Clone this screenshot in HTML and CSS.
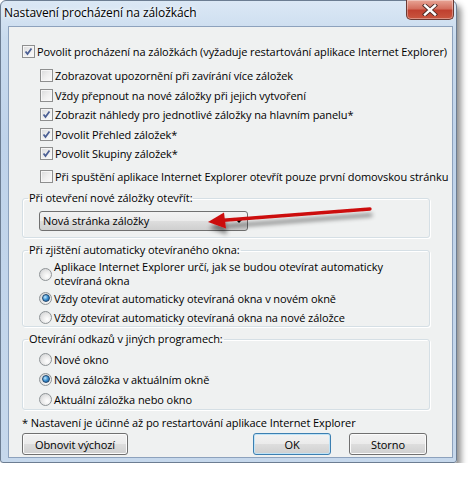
FILE: index.html
```html
<!DOCTYPE html>
<html lang="cs">
<head>
    <meta charset="UTF-8">
    <title>Nastavení procházení na záložkách</title>
    <link rel="stylesheet" href="styles.css">
</head>
<body>
    <div class="window">
        <div class="titlebar">
            <span class="title">Nastavení procházení na záložkách</span>
            <span class="close">
                <svg width="16" height="12" viewBox="0 0 16 12">
                    <path d="M3 1.5 L13 10.5 M13 1.5 L3 10.5" stroke="#4a2a26" stroke-width="4.2" stroke-linecap="square"/>
                    <path d="M3 1.5 L13 10.5 M13 1.5 L3 10.5" stroke="#ffffff" stroke-width="2.4" stroke-linecap="square"/>
                </svg>
            </span>
        </div>

        <div class="client">
            <label class="row main"><span class="box on"><svg viewBox="0 0 13 13"><path d="M3 6.5 L5.3 9.5 L10 3" /></svg></span>Povolit procházení na záložkách (vyžaduje restartování aplikace Internet Explorer)</label>

            <div class="sub">
                <label class="row"><span class="box"></span>Zobrazovat upozornění při zavírání více záložek</label>
                <label class="row"><span class="box"></span>Vždy přepnout na nové záložky při jejich vytvoření</label>
                <label class="row"><span class="box on"><svg viewBox="0 0 13 13"><path d="M3 6.5 L5.3 9.5 L10 3" /></svg></span>Zobrazit náhledy pro jednotlivé záložky na hlavním panelu*</label>
                <label class="row"><span class="box on"><svg viewBox="0 0 13 13"><path d="M3 6.5 L5.3 9.5 L10 3" /></svg></span>Povolit Přehled záložek*</label>
                <label class="row"><span class="box on"><svg viewBox="0 0 13 13"><path d="M3 6.5 L5.3 9.5 L10 3" /></svg></span>Povolit Skupiny záložek*</label>
                <label class="row last"><span class="box"></span>Při spuštění aplikace Internet Explorer otevřít pouze první domovskou stránku</label>
            </div>

            <fieldset class="group first">
                <legend>Při otevření nové záložky otevřít:</legend>
                <div class="combo">Nová stránka záložky<span class="caret"></span></div>
            </fieldset>

            <fieldset class="group second">
                <legend>Při zjištění automaticky otevíraného okna:</legend>
                <div class="options">
                    <label class="row tall"><span class="radio"></span><span class="two-line">Aplikace Internet Explorer určí, jak se budou otevírat automaticky<br>otevíraná okna</span></label>
                    <label class="row"><span class="radio on"></span>Vždy otevírat automaticky otevíraná okna v novém okně</label>
                    <label class="row"><span class="radio"></span>Vždy otevírat automaticky otevíraná okna na nové záložce</label>
                </div>
            </fieldset>

            <fieldset class="group third">
                <legend>Otevírání odkazů v jiných programech:</legend>
                <div class="options">
                    <label class="row"><span class="radio"></span>Nové okno</label>
                    <label class="row"><span class="radio on"></span>Nová záložka v aktuálním okně</label>
                    <label class="row"><span class="radio"></span>Aktuální záložka nebo okno</label>
                </div>
            </fieldset>

            <p class="note">* Nastavení je účinné až po restartování aplikace Internet Explorer</p>

            <div class="buttons">
                <button type="button" class="btn reset">Obnovit výchozí</button>
                <span class="spacer"></span>
                <button type="button" class="btn default">OK</button>
                <button type="button" class="btn">Storno</button>
            </div>
        </div>

        <!-- annotation arrow drawn over the dialog -->
        <svg class="arrow" width="190" height="44" viewBox="0 0 190 44">
            <defs>
                <filter id="shade" x="-10%" y="-50%" width="120%" height="250%">
                    <feDropShadow dx="1" dy="6" stdDeviation="2.2" flood-color="#000" flood-opacity="0.45"/>
                </filter>
            </defs>
            <g filter="url(#shade)">
                <path d="M180 9 L30 20.5" stroke="#cc1111" stroke-width="3.4" stroke-linecap="round"/>
                <path d="M18 22 L34 12.5 L36 28.5 Z" fill="#cc1111"/>
            </g>
        </svg>
    </div>
</body>
</html>
```

FILE: styles.css
```css
/* Global Styles */
body {
    margin: 0;
    padding: 0;
    background-color: #ffffff;
    font-family: "Open Sans", "Noto Sans", sans-serif;
    font-size: 11px;
    letter-spacing: -0.08px;
    color: #000000;
}

.window {
    position: relative;
    width: 457px;
    height: 463px;
    box-sizing: border-box;
    border: 1px solid #6c7d92;
    border-radius: 6px 6px 3px 3px;
    background: linear-gradient(180deg, #dbe8f5 0%, #c9dbee 8%, #bfd3ea 30%, #c6d8ec 100%);
    box-shadow: 4px 5px 6px rgba(0, 0, 0, 0.45);
    display: flex;
    flex-direction: column;
}

.titlebar {
    height: 25px;
    display: flex;
    align-items: flex-start;
}

.title {
    padding: 4px 0 0 3px;
    font-size: 12px;
    line-height: 16px;
    text-shadow: 0 0 6px #ffffff, 0 0 3px #ffffff;
}

.close {
    margin-left: auto;
    margin-right: 2px;
    margin-top: -1px;
    width: 48px;
    height: 20px;
    box-sizing: border-box;
    border: 1px solid #6b3a33;
    border-top: none;
    border-radius: 0 0 5px 5px;
    background: linear-gradient(180deg, #e8a596 0%, #d46f5e 45%, #c0402f 55%, #c9563f 100%);
    box-shadow: inset 0 0 0 1px rgba(255, 255, 255, 0.35);
    display: flex;
    align-items: center;
    justify-content: center;
}

.client {
    flex: 1;
    margin: 0 3px 4px 7px;
    padding: 14px 22px 0 13px;
    background-color: #eff1f1;
    border: 1px solid #8da2bd;
    box-sizing: border-box;
}

.row {
    display: flex;
    align-items: center;
    gap: 2px;
    height: 20px;
    white-space: nowrap;
}

.sub {
    margin: 5px 0 0 18px;
}

.sub .row {
    height: 19.5px;
}

.sub .row.last {
    margin-top: 3px;
}

.box {
    width: 13px;
    height: 13px;
    flex: none;
    box-sizing: border-box;
    border: 1px solid #8e8f8f;
    background: linear-gradient(135deg, #d9dadb 0%, #eeeeee 50%, #fbfbfb 100%);
    box-shadow: inset 0 0 0 1px #f6f6f6;
}

.box svg {
    display: block;
    width: 11px;
    height: 11px;
    margin: 0;
}

.box svg path {
    fill: none;
    stroke: #4b5f94;
    stroke-width: 2.1;
}

.radio {
    width: 13px;
    height: 13px;
    flex: none;
    box-sizing: border-box;
    border-radius: 50%;
    border: 1px solid #8e9396;
    background: radial-gradient(circle at 65% 65%, #ffffff 0%, #eaeaea 45%, #c9cbcd 100%);
    display: flex;
    align-items: center;
    justify-content: center;
}

.radio.on::after {
    content: "";
    width: 6px;
    height: 6px;
    border-radius: 50%;
    background: radial-gradient(circle at 35% 35%, #bfe8ff 0%, #3a8fd0 50%, #1b4f86 100%);
    border: 0.5px solid #20466d;
}

.group {
    margin: 5px 0 0 0;
    padding: 0 0 0 5px;
    border: 1px solid #d5dfe5;
    border-radius: 3px;
    box-shadow: inset 1px 1px 0 #ffffff, 1px 1px 0 #ffffff;
}

.group legend {
    padding: 0 1px;
    line-height: 14px;
}

.group.second {
    margin-top: 5px;
}

.group.third {
    margin-top: 5px;
}

.combo {
    position: relative;
    margin: 6px 0 6px 11px;
    width: 209px;
    height: 20px;
    box-sizing: border-box;
    padding-left: 3px;
    line-height: 18px;
    border: 1px solid #707070;
    border-radius: 3px;
    background: linear-gradient(180deg, #f2f2f2 0%, #ebebeb 48%, #dddddd 52%, #cfcfcf 100%);
}

.caret {
    position: absolute;
    right: 5px;
    top: 8px;
    border-left: 3px solid transparent;
    border-right: 3px solid transparent;
    border-top: 3px solid #000000;
}

.options {
    margin: 3px 0 0 11px;
}

.second .options .row:last-child {
    height: 18px;
}

.row.tall {
    height: 28px;
}

.two-line {
    line-height: 14px;
}

.third .options {
    margin-top: 3px;
}

.note {
    margin: 5px 0 0 0;
    line-height: 16px;
    white-space: nowrap;
}

.buttons {
    display: flex;
    margin: 2px 3px 0 0;
    gap: 18px;
}

.spacer {
    flex: 1;
}

.btn {
    width: 78px;
    height: 22px;
    padding: 0;
    font-family: inherit;
    font-size: 11px;
    letter-spacing: inherit;
    color: #000000;
    border: 1px solid #707070;
    border-radius: 3px;
    background: linear-gradient(180deg, #f2f2f2 0%, #ebebeb 48%, #dddddd 52%, #cfcfcf 100%);
    box-shadow: inset 0 0 0 1px #fbfbfb;
}

.btn.reset {
    width: 106px;
}

.btn.default {
    border-color: #3c7fb1;
    box-shadow: inset 0 0 0 1px #bfe3f7;
}

.arrow {
    position: absolute;
    left: 189px;
    top: 199px;
}
```
